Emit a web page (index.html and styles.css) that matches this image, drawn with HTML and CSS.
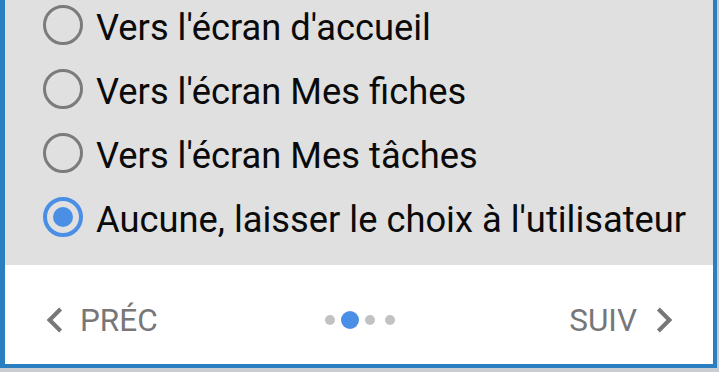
FILE: index.html
```html
<!DOCTYPE html>
<html lang="fr">
<head>
<meta charset="utf-8">
<title>Écran de démarrage</title>
<link rel="stylesheet" href="styles.css">
</head>
<body>
<div class="frame">
  <div class="choices">
    <div class="option">
      <span class="radio"></span>
      <span class="label">Vers l'écran d'accueil</span>
    </div>
    <div class="option">
      <span class="radio"></span>
      <span class="label">Vers l'écran Mes fiches</span>
    </div>
    <div class="option">
      <span class="radio"></span>
      <span class="label">Vers l'écran Mes tâches</span>
    </div>
    <div class="option">
      <span class="radio checked"><span class="radio-dot"></span></span>
      <span class="label">Aucune, laisser le choix à l'utilisateur</span>
    </div>
  </div>
  <div class="footer">
    <div class="nav nav-prev">
      <svg class="chev" viewBox="0 0 24 24"><path d="M15.41 7.41L14 6l-6 6 6 6 1.41-1.41L10.83 12z"/></svg>
      <span class="nav-text">PRÉC</span>
    </div>
    <div class="dots">
      <span class="dot"></span>
      <span class="dot active"></span>
      <span class="dot"></span>
      <span class="dot"></span>
    </div>
    <div class="nav nav-next">
      <span class="nav-text">SUIV</span>
      <svg class="chev" viewBox="0 0 24 24"><path d="M10 6L8.59 7.41 13.17 12l-4.58 4.59L10 18l6-6z"/></svg>
    </div>
  </div>
</div>
</body>
</html>
```

FILE: styles.css
```css
html, body {
  margin: 0;
  padding: 0;
}
body {
  background: #c9ccd0;
  font-family: Roboto, "Noto Sans", sans-serif;
  width: 719px;
  height: 372px;
  overflow: hidden;
}
.frame {
  width: 717px;
  height: 368px;
  box-sizing: border-box;
  border-left: 5px solid #2a7fc1;
  border-right: 4px solid #2a7fc1;
  border-bottom: 4px solid #2a7fc1;
  display: flex;
  flex-direction: column;
  background: #fff;
}
.choices {
  height: 265px;
  flex: none;
  background: #e0e0e0;
  display: flex;
  flex-direction: column;
  justify-content: flex-end;
  overflow: hidden;
  padding: 0 0 16px 38px;
  box-sizing: border-box;
}
.option {
  height: 64px;
  flex: none;
  display: flex;
  align-items: center;
  gap: 13px;
}
.radio {
  width: 40px;
  height: 40px;
  box-sizing: border-box;
  border: 3.5px solid #7b7b7b;
  border-radius: 50%;
  flex: none;
  display: flex;
  align-items: center;
  justify-content: center;
}
.radio.checked {
  border: 4px solid #4a8ee6;
}
.radio-dot {
  width: 20px;
  height: 20px;
  border-radius: 50%;
  background: #4a8ee6;
}
.label {
  font-size: 36.3px;
  color: #0a0a0a;
  white-space: nowrap;
  padding-top: 4px;
}
.footer {
  flex: 1;
  display: grid;
  grid-template-columns: 1fr auto 1fr;
  align-items: center;
  padding: 11px 24px 0 25px;
  box-sizing: border-box;
}
.nav {
  display: flex;
  align-items: center;
  color: #777;
  font-size: 31.5px;
}
.nav-prev {
  justify-self: start;
}
.nav-next {
  justify-self: end;
  gap: 2px;
}
.chev {
  width: 50px;
  height: 50px;
  fill: #777;
  flex: none;
}
.dots {
  display: grid;
  grid-template-columns: repeat(4, 20px);
  justify-items: center;
  align-items: center;
}
.dot {
  width: 10px;
  height: 10px;
  border-radius: 50%;
  background: #c2c2c2;
}
.dot.active {
  width: 18px;
  height: 18px;
  background: #4a8ee6;
}
```
